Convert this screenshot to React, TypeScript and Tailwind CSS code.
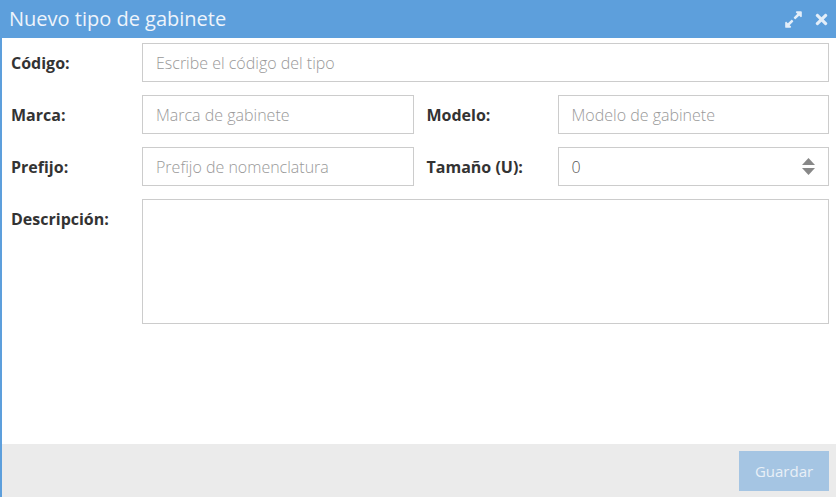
import { FaExpandAlt, FaTimes } from "react-icons/fa";

function Field({ label, placeholder, value, spinner }: { label: string; placeholder?: string; value?: string; spinner?: boolean }) {
  return (
    <div className="flex flex-1 items-center">
      <label className="w-[131px] shrink-0 text-[16px] font-bold text-[#333]">{label}</label>
      <div className="relative flex h-[39px] flex-1 items-center border border-[#ccc] bg-white px-[13px]">
        {value !== undefined ? (
          <span className="text-[16px] font-light text-[#555]">{value}</span>
        ) : (
          <span className="text-[16px] font-light text-[#999]">{placeholder}</span>
        )}
        {spinner && (
          <div className="absolute right-[13px] flex flex-col gap-[3px]">
            <svg width="13" height="7" viewBox="0 0 13 7">
              <path d="M6.5 0 L13 7 L0 7 Z" fill="#888" />
            </svg>
            <svg width="13" height="7" viewBox="0 0 13 7">
              <path d="M0 0 L13 0 L6.5 7 Z" fill="#888" />
            </svg>
          </div>
        )}
      </div>
    </div>
  );
}

export default function App() {
  return (
    <div
      className="flex h-[497px] w-[836px] flex-col border-l-2 border-[#5d9fdc] bg-white"
      style={{ fontFamily: '"Open Sans", "Liberation Sans", sans-serif' }}
    >
      <div className="flex h-[38px] shrink-0 items-center justify-between bg-[#5d9fdc] pl-[7px] pr-[6px]">
        <span className="text-[20px] text-[#eef4fb]">Nuevo tipo de gabinete</span>
        <div className="flex items-center gap-[10px] text-[#e3eef9]">
          <FaExpandAlt size={19} />
          <FaTimes size={17} />
        </div>
      </div>
      <div className="flex flex-1 flex-col gap-[13px] pl-[9px] pr-[7px] pt-[5px]">
        <div className="flex">
          <Field label="Código:" placeholder="Escribe el código del tipo" />
        </div>
        <div className="flex gap-[13px]">
          <Field label="Marca:" placeholder="Marca de gabinete" />
          <Field label="Modelo:" placeholder="Modelo de gabinete" />
        </div>
        <div className="flex gap-[13px]">
          <Field label="Prefijo:" placeholder="Prefijo de nomenclatura" />
          <Field label="Tamaño (U):" value="0" spinner />
        </div>
        <div className="flex items-start">
          <label className="w-[131px] shrink-0 pt-[8px] text-[16px] font-bold text-[#333]">Descripción:</label>
          <textarea className="h-[125px] flex-1 resize-none border border-[#ccc] bg-white outline-none" />
        </div>
      </div>
      <div className="flex h-[53px] shrink-0 justify-end bg-[#ebebeb] pr-[7px] pt-[7px]">
        <button className="h-[40px] w-[90px] bg-[#a5c5e3] text-[15px] text-[#e9f0f7]">Guardar</button>
      </div>
    </div>
  );
}
